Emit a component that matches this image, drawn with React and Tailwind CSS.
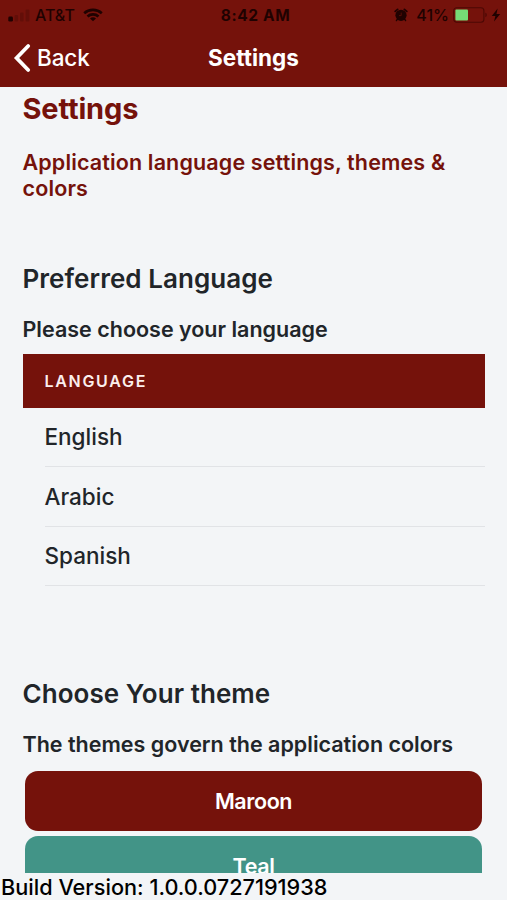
import React from 'react';

const LANGUAGES = ['English', 'Arabic', 'Spanish'];

const THEMES = [
  { name: 'Maroon', className: 'bg-[#75120b]' },
  { name: 'Teal', className: 'bg-[#429487]' },
];

function SignalIcon() {
  return (
    <svg width="22" height="13" viewBox="0 0 22 13" fill="#1f0201">
      <rect x="0.3" y="7.6" width="4.6" height="5" rx="1.4" />
      <rect x="6.5" y="6" width="3.6" height="6.6" rx="1" fillOpacity="0.2" />
      <rect x="12" y="3.4" width="3.6" height="9.2" rx="1" fillOpacity="0.2" />
      <rect x="17.6" y="0.6" width="3.8" height="12" rx="1" fillOpacity="0.2" />
    </svg>
  );
}

function WifiIcon() {
  return (
    <svg width="20" height="14" viewBox="0 0 20 14" fill="none" stroke="#1f0201" strokeWidth="2.6">
      <path d="M1.2 5.2C6.1 0.8 13.9 0.8 18.8 5.2" />
      <path d="M4.5 8.5C7.6 5.7 12.4 5.7 15.5 8.5" />
      <path d="M10 13.2L7 10.4C8.7 8.9 11.3 8.9 13 10.4Z" fill="#1f0201" stroke="none" />
    </svg>
  );
}

function AlarmIcon() {
  return (
    <svg width="14" height="14" viewBox="0 0 14 14">
      <circle cx="7" cy="7.3" r="5.6" fill="#1f0201" />
      <path d="M1.2 3.4L3.6 1.4M12.8 3.4L10.4 1.4" stroke="#1f0201" strokeWidth="1.8" strokeLinecap="round" />
      <path d="M3.2 11.4L2.4 12.6M10.8 11.4L11.6 12.6" stroke="#1f0201" strokeWidth="1.4" strokeLinecap="round" />
      <path d="M7.2 4.6V7.6H5" fill="none" stroke="#5c0e08" strokeWidth="0.9" />
    </svg>
  );
}

function BatteryIcon() {
  return (
    <svg width="36" height="16" viewBox="0 0 36 16">
      <rect x="0.7" y="0.7" width="30.2" height="14.6" rx="3" fill="none" stroke="#4c0804" strokeWidth="1.1" />
      <rect x="2.4" y="2.6" width="12.6" height="10.8" rx="1" fill="#76db76" />
      <path d="M32.4 5.8C34.2 6.4 34.2 9.6 32.4 10.2Z" fill="#4c0804" />
    </svg>
  );
}

function BoltIcon() {
  return (
    <svg width="10" height="14" viewBox="0 0 10 14" fill="#1f0201">
      <path d="M6.6 0.4L0.8 7.9H4.4L3 13.6L9.2 5.9H5.5Z" />
    </svg>
  );
}

function StatusBar() {
  return (
    <div className="grid h-[30px] grid-cols-3 items-center pl-2 pr-1.5 text-[#1f0201]">
      <div className="flex items-center">
        <SignalIcon />
        <span className="ml-[5px] mr-[8px] text-[16px] font-medium">AT&amp;T</span>
        <WifiIcon />
      </div>
      <span className="pl-[2px] pt-px text-center text-[15.5px] font-bold tracking-[0.6px]">8:42 AM</span>
      <div className="flex items-center justify-end">
        <AlarmIcon />
        <span className="ml-[8px] mr-[4px] text-[16px] font-medium">41%</span>
        <BatteryIcon />
        <span className="ml-[2px]"><BoltIcon /></span>
      </div>
    </div>
  );
}

function NavBar() {
  return (
    <div className="grid h-[55px] grid-cols-3 items-center px-[13px] text-white">
      <button type="button" className="flex items-center gap-[6px] text-left text-[22.5px] font-medium tracking-[-0.1px]">
        <svg width="18" height="30" viewBox="0 0 18 30" fill="none" stroke="currentColor" strokeWidth="3.8" strokeLinecap="round" strokeLinejoin="miter">
          <path d="M15.2 3L3.6 15L15.2 27" />
        </svg>
        Back
      </button>
      <span className="text-center text-[22.5px] font-bold">Settings</span>
    </div>
  );
}

function SectionTitle({ children }) {
  return <h2 className="text-[26px] font-semibold leading-8 tracking-[0.05px] text-[#212529]">{children}</h2>;
}

function SectionHint({ children }) {
  return <p className="mt-[21px] text-[21.5px] font-semibold leading-[26px] text-[#212529]">{children}</p>;
}

export default function App() {
  return (
    <div className="flex h-[900px] w-[507px] flex-col overflow-hidden bg-[#f3f5f7] font-['Inter',sans-serif]">
      <header className="h-[87px] shrink-0 bg-[#75120b]">
        <StatusBar />
        <NavBar />
      </header>

      <main className="h-[786px] shrink-0 overflow-hidden px-[22.5px]">
        <h1 className="pt-[4px] text-[29px] font-bold leading-9 tracking-[-0.15px] text-[#75120b]">Settings</h1>
        <p className="mt-[22px] text-[21.5px] font-semibold leading-[26px] tracking-[0.14px] text-[#75120b]">
          Application language settings, themes &amp; colors
        </p>

        <section className="mt-[62px]">
          <SectionTitle>Preferred Language</SectionTitle>
          <SectionHint>Please choose your language</SectionHint>
          <div className="mt-[12px]">
            <div className="flex h-[54px] items-center bg-[#75120b] pl-[22px] text-[16px] font-semibold tracking-[1.7px] text-[#fbeeec]">
              LANGUAGE
            </div>
            <ul className="pl-[22px]">
              {LANGUAGES.map((lang) => (
                <li key={lang} className="flex h-[59.4px] items-center border-b border-[#e1e3e6] text-[22.5px] font-medium text-[#212529]">
                  {lang}
                </li>
              ))}
            </ul>
          </div>
        </section>

        <section className="mt-[91.8px]">
          <SectionTitle>Choose Your theme</SectionTitle>
          <SectionHint>The themes govern the application colors</SectionHint>
          <div className="mt-[14px] flex flex-col gap-[5px] px-[2.5px]">
            {THEMES.map((theme) => (
              <button key={theme.name} type="button" className={`h-[60px] rounded-[13px] text-[21.5px] font-semibold tracking-[-0.4px] text-white ${theme.className}`}>
                {theme.name}
              </button>
            ))}
          </div>
        </section>
      </main>

      <footer className="pl-px pt-px text-[21.7px] font-medium leading-[26px] text-black">Build Version: 1.0.0.0727191938</footer>
    </div>
  );
}
